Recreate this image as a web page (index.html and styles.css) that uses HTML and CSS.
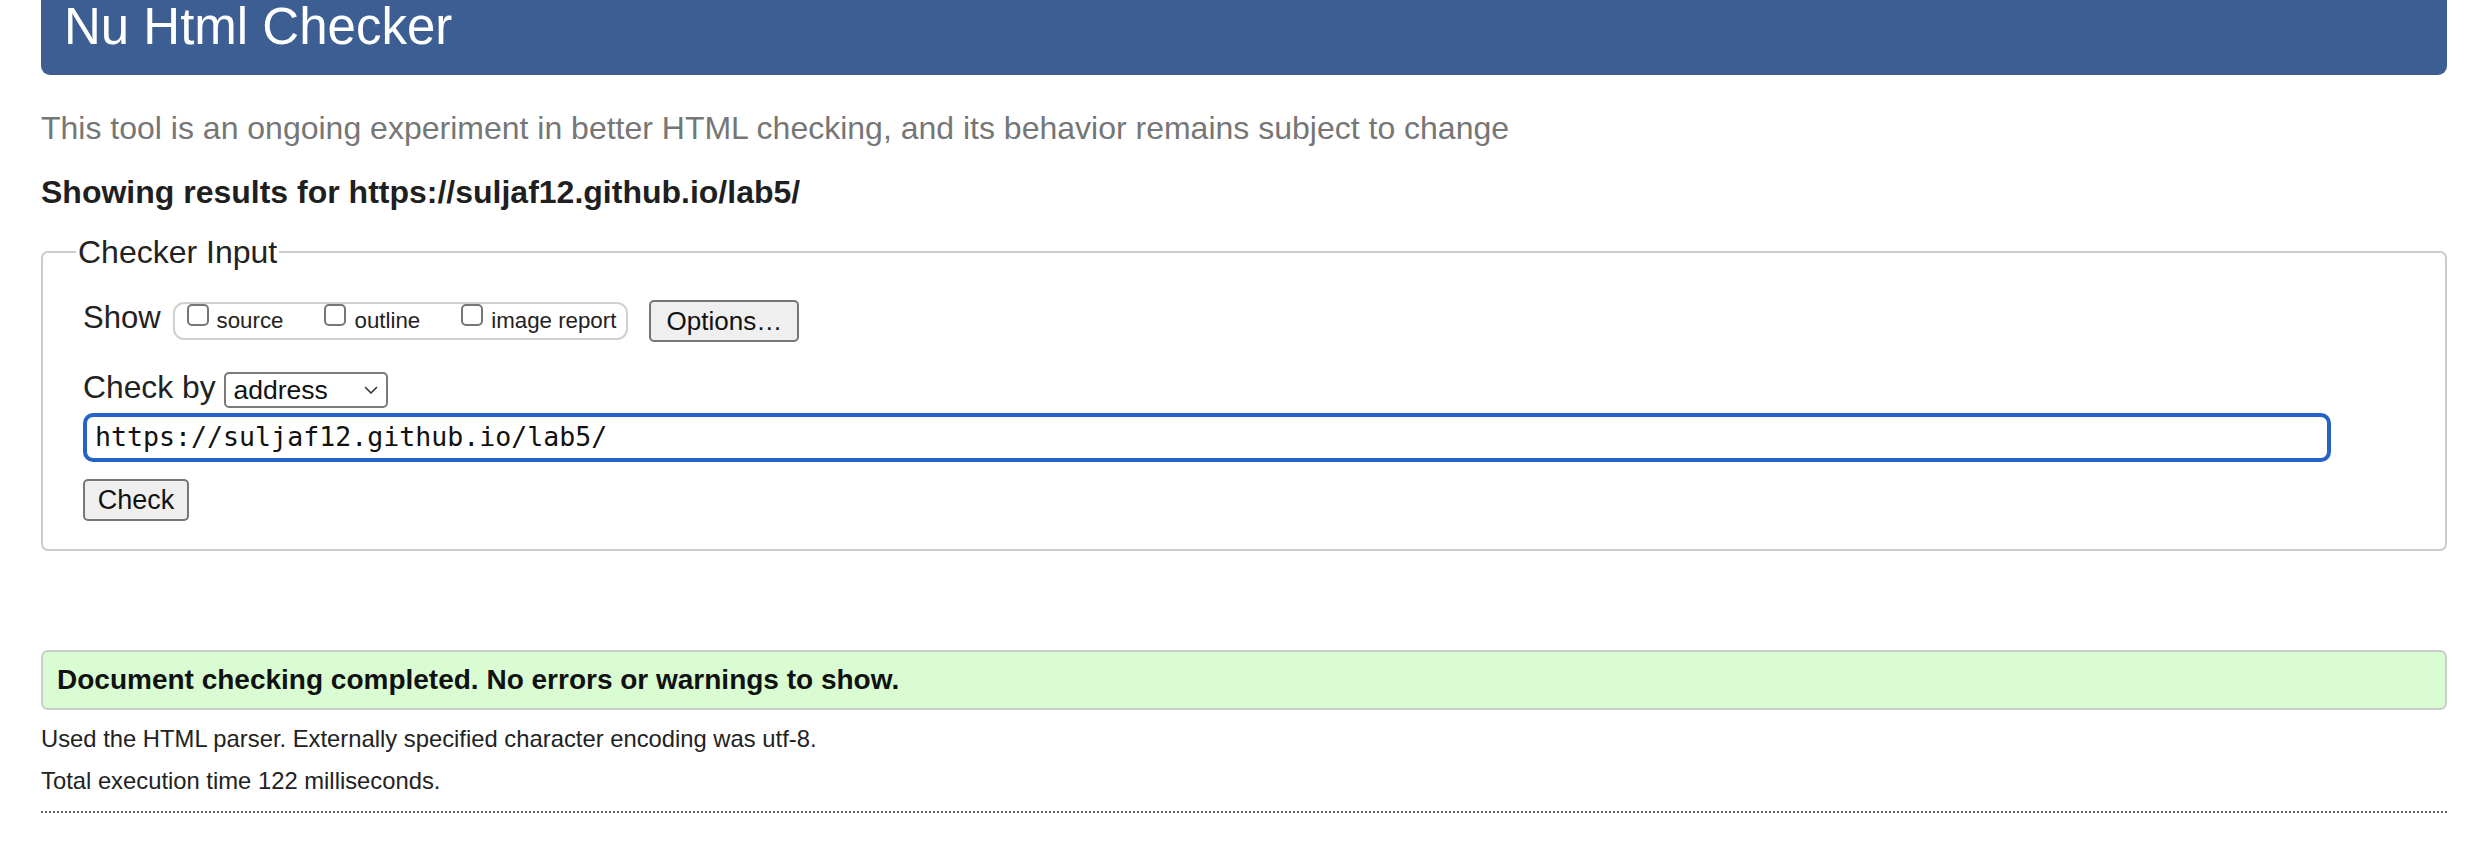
FILE: index.html
```html
<!DOCTYPE html>
<html lang="en">
<head>
<meta charset="utf-8">
<title>Nu Html Checker</title>
<link rel="stylesheet" href="styles.css">
</head>
<body>
<h1 class="banner">Nu Html Checker</h1>
<p class="intro">This tool is an ongoing experiment in better HTML checking, and its behavior remains subject to change</p>
<p class="results-for">Showing results for https://suljaf12.github.io/lab5/</p>
<form class="checker">
  <fieldset class="checker-input">
    <legend class="checker-legend">Checker Input</legend>
    <div class="row row-show">
      <span class="row-label label-show">Show</span>
      <span class="show-group">
        <label class="opt"><input type="checkbox" class="cb"><span class="opt-text">source</span></label>
        <label class="opt"><input type="checkbox" class="cb"><span class="opt-text">outline</span></label>
        <label class="opt"><input type="checkbox" class="cb"><span class="opt-text">image report</span></label>
      </span>
      <button type="button" class="btn btn-options">Options…</button>
    </div>
    <div class="row row-checkby">
      <span class="row-label label-checkby">Check by</span>
      <span class="select-wrap">
        <select class="select"><option>address</option></select>
        <svg class="chev" width="14" height="9" viewBox="0 0 14 9"><path d="M1.5 1.5 L7 7 L12.5 1.5" fill="none" stroke="#333" stroke-width="1.6" stroke-linecap="round" stroke-linejoin="round"/></svg>
      </span>
    </div>
    <input class="url" type="text" value="https://suljaf12.github.io/lab5/">
    <div class="check-row"><button type="button" class="btn btn-check">Check</button></div>
  </fieldset>
</form>
<div class="success">Document checking completed. No errors or warnings to show.</div>
<p class="meta meta-parser">Used the HTML parser. Externally specified character encoding was utf-8.</p>
<p class="meta meta-time">Total execution time 122 milliseconds.</p>
<hr class="rule">
</body>
</html>
```
FILE: styles.css
```css
html, body {
  background: #ffffff;
}
body {
  margin: 0;
  padding: 0 19px 0 41px;
  font-family: "Liberation Sans", Arial, Helvetica, sans-serif;
  color: #222222;
}
.banner {
  margin: 0;
  height: 75px;
  box-sizing: border-box;
  padding: 0 0 22px 23px;
  background: #3d5e92;
  color: #ffffff;
  font-size: 51px;
  font-weight: normal;
  line-height: 53px;
  border-radius: 0 0 9px 9px;
}
.intro {
  margin: 35px 0 0;
  font-size: 32px;
  line-height: 37px;
  color: #767676;
}
.results-for {
  margin: 26px 0 0;
  font-size: 32px;
  line-height: 38px;
  font-weight: bold;
  color: #1f1f1f;
}
.checker {
  margin: 0;
}
.checker-input {
  margin: 24px 0 0;
  padding: 31px 114px 28px 40px;
  border: 2px solid #cccccc;
  border-radius: 7px;
  min-width: 0;
}
.checker-legend {
  padding: 0 2px;
  margin-left: -7px;
  font-size: 32px;
  line-height: 34px;
  color: #222222;
}
.row {
  display: flex;
  align-items: flex-start;
}
.row-show {
  height: 42px;
}
.row-checkby {
  margin-top: 30px;
  height: 36px;
}
.row-label {
  font-size: 31px;
  line-height: 34px;
  color: #222222;
}
.label-show {
  margin-top: 1px;
  margin-right: 12px;
}
.label-checkby {
  font-size: 31.8px;
  margin-top: -2px;
  margin-right: 8px;
}
.show-group {
  margin-top: 2px;
  height: 38px;
  box-sizing: border-box;
  display: inline-flex;
  align-items: flex-start;
  gap: 41px;
  padding: 0 10px 0 12px;
  border: 2px solid #d0d0d0;
  border-radius: 11px;
}
.opt {
  display: inline-flex;
  align-items: flex-start;
  gap: 8px;
}
.cb {
  appearance: none;
  -webkit-appearance: none;
  margin: 0;
  width: 22px;
  height: 22px;
  box-sizing: border-box;
  border: 2px solid #767676;
  border-radius: 5px;
  background: #ffffff;
}
.opt-text {
  font-size: 22.3px;
  line-height: 34px;
  color: #222222;
}
.btn {
  box-sizing: border-box;
  margin: 0;
  background: #efefef;
  border: 2px solid #767676;
  border-radius: 5px;
  font-family: "Liberation Sans", Arial, Helvetica, sans-serif;
  color: #111111;
  padding: 0;
}
.btn-options {
  margin-left: 21px;
  width: 150px;
  height: 42px;
  font-size: 26px;
}
.select-wrap {
  position: relative;
  display: inline-block;
}
.select {
  appearance: none;
  -webkit-appearance: none;
  width: 164px;
  height: 36px;
  box-sizing: border-box;
  margin: 0;
  padding: 0 0 0 8px;
  border: 2px solid #7a7a7a;
  border-radius: 5px;
  background: #ffffff;
  font-family: "Liberation Sans", Arial, Helvetica, sans-serif;
  font-size: 26.5px;
  color: #111111;
}
.chev {
  position: absolute;
  right: 10px;
  top: 14px;
  pointer-events: none;
}
.url {
  display: block;
  margin: 5px 0 0;
  width: 100%;
  height: 49px;
  box-sizing: border-box;
  padding: 0 0 2px 8px;
  border: 4px solid #2563c8;
  border-radius: 10px;
  outline: none;
  background: #ffffff;
  font-family: "DejaVu Sans Mono", "Liberation Mono", monospace;
  font-size: 26.6px;
  color: #111111;
}
.check-row {
  margin-top: 17px;
}
.btn-check {
  width: 106px;
  height: 42px;
  font-size: 27px;
}
.success {
  margin-top: 99px;
  height: 60px;
  box-sizing: border-box;
  padding: 0 14px;
  border: 2px solid #cccccc;
  border-radius: 7px;
  background: #d9fcd2;
  font-size: 28px;
  line-height: 56px;
  font-weight: bold;
  color: #111111;
}
.meta {
  font-size: 23.8px;
  line-height: 28px;
  color: #222222;
}
.meta-parser {
  margin: 15px 0 0;
}
.meta-time {
  margin: 14px 0 0;
}
.rule {
  margin: 16px 0 0;
  border: 0;
  border-top: 2px dotted #666666;
  height: 0;
}
```
